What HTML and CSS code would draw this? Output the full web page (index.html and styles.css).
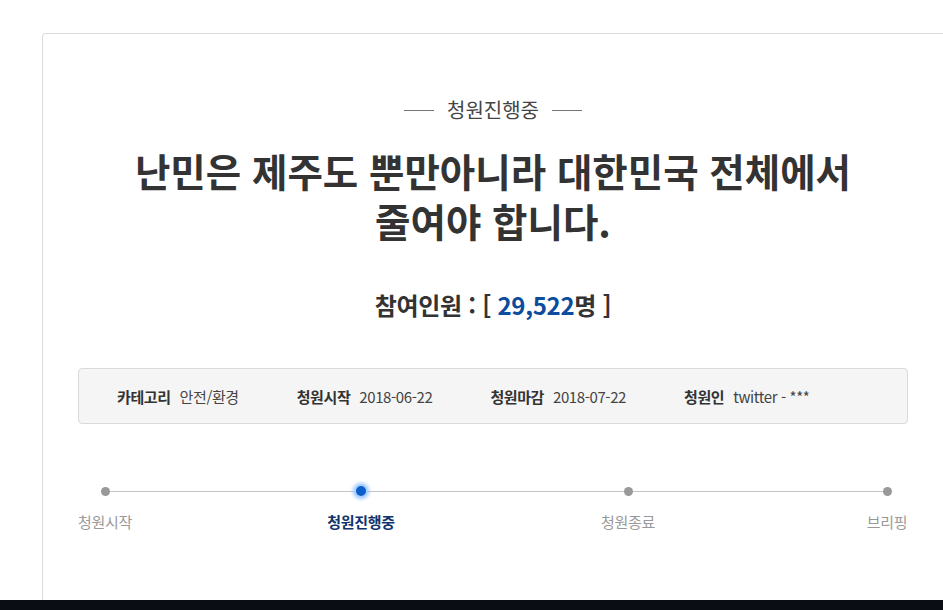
FILE: index.html
```html
<!DOCTYPE html>
<html lang="ko">
<head>
<meta charset="utf-8">
<title>청원진행중</title>
<link rel="stylesheet" href="styles.css">
</head>
<body>
<div class="page">
  <div class="card">
    <div class="status"><span class="dash"></span><span class="status-text">청원진행중</span><span class="dash"></span></div>
    <h1 class="title">난민은 제주도 뿐만아니라 대한민국 전체에서<br>줄여야 합니다.</h1>
    <div class="count">참여인원 : [ <span class="num">29,522</span>명 ]</div>
    <ul class="info">
      <li class="info-item"><span class="label">카테고리</span><span class="value">안전/환경</span></li>
      <li class="info-item"><span class="label">청원시작</span><span class="value">2018-06-22</span></li>
      <li class="info-item"><span class="label">청원마감</span><span class="value">2018-07-22</span></li>
      <li class="info-item"><span class="label">청원인</span><span class="value">twitter - ***</span></li>
    </ul>
    <ol class="steps">
      <li class="step step-1"><span class="dot"></span><span class="step-label">청원시작</span></li>
      <li class="step step-2 active"><span class="dot"></span><span class="step-label">청원진행중</span></li>
      <li class="step step-3"><span class="dot"></span><span class="step-label">청원종료</span></li>
      <li class="step step-4"><span class="dot"></span><span class="step-label">브리핑</span></li>
    </ol>
  </div>
  <div class="footer"></div>
</div>
</body>
</html>
```

FILE: styles.css
```css
html, body {
  margin: 0;
  padding: 0;
  background: #fff;
  overflow: hidden;
}
body {
  font-family: "Noto Sans CJK KR", "Noto Sans", sans-serif;
  color: #333;
}
.page {
  width: 943px;
  height: 610px;
  display: flex;
  flex-direction: column;
  padding-top: 33px;
  box-sizing: border-box;
  overflow: hidden;
}
.card {
  margin-left: 42px;
  width: 902px;
  flex: 0 0 567px;
  box-sizing: border-box;
  border: 1px solid #dcdcdc;
  border-bottom: 0;
  border-radius: 4px 0 0 0;
  padding: 62px 35px 0 35px;
  display: flex;
  flex-direction: column;
}
.footer {
  flex: 1;
  background: #0a0d13;
}
.status {
  display: flex;
  justify-content: center;
  align-items: center;
  gap: 13px;
  height: 28px;
}
.dash {
  width: 30px;
  height: 1px;
  background: #777;
}
.status-text {
  font-size: 20px;
  line-height: 28px;
  color: #444;
  letter-spacing: 0;
}
.title {
  margin: 21px 0 0;
  text-align: center;
  font-size: 38.5px;
  line-height: 50px;
  font-weight: 700;
  color: #333;
  letter-spacing: 0;
}
.count {
  margin-top: 43px;
  text-align: center;
  font-size: 24px;
  line-height: 34px;
  font-weight: 700;
  color: #333;
  letter-spacing: -0.3px;
}
.num {
  color: #0c4c9c;
}
.info {
  list-style: none;
  margin: 46px 0 0;
  padding: 0 0 0 38px;
  height: 56px;
  box-sizing: border-box;
  border: 1px solid #d9d9d9;
  border-radius: 4px;
  background: #f5f5f5;
  display: flex;
  align-items: center;
  gap: 58px;
  font-size: 15px;
  letter-spacing: -0.4px;
}
.info-item {
  display: flex;
  gap: 9px;
}
.label {
  font-weight: 700;
  color: #333;
}
.value {
  color: #444;
}
.steps {
  list-style: none;
  margin: 58px 0 0 -1px;
  padding: 0;
  display: flex;
  position: relative;
}
.steps::before {
  content: "";
  position: absolute;
  left: 28px;
  width: 782px;
  top: 9px;
  height: 1px;
  background: #c4c4c4;
}
.step {
  width: 56px;
  flex-shrink: 0;
  display: flex;
  flex-direction: column;
  align-items: center;
  position: relative;
}
.step-2 { margin-left: 200px; }
.step-3 { margin-left: 211px; }
.step-4 { margin-left: 203px; }
.dot {
  width: 9px;
  height: 9px;
  margin: 5px 0 4px;
  border-radius: 50%;
  background: #999;
}
.active .dot {
  width: 10px;
  height: 10px;
  margin: 4px 0 4px;
  background: #0a5fcc;
  box-shadow: 0 0 0 2px #a9d0ff, 0 0 3px 4px rgba(140, 190, 255, 0.55);
}
.step-label {
  margin-top: 12px;
  font-size: 15px;
  line-height: 20px;
  color: #999;
  white-space: nowrap;
  letter-spacing: -0.3px;
}
.active .step-label {
  font-weight: 700;
  color: #10336e;
}
```
